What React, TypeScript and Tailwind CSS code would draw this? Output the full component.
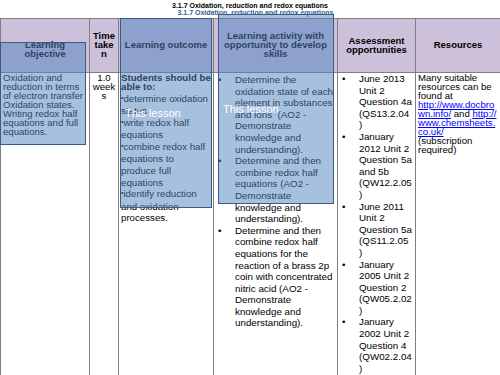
import React from "react";

const Lines = ({ lines }: { lines: string[] }) => (
  <>
    {lines.map((l, i) => (
      <div key={i} className="whitespace-pre">
        {l}
      </div>
    ))}
  </>
);

const BulletItem = ({ lines }: { lines: string[] }) => (
  <div className="flex">
    <div className="w-[18px] shrink-0 pl-[1px] leading-[9px] pt-[1px]">•</div>
    <div>
      <Lines lines={lines} />
    </div>
  </div>
);

const SmallBullet = ({ first, rest }: { first: string; rest: string[] }) => (
  <>
    <div className="whitespace-pre">
      <span className="relative -top-[2px] text-[7px]">•</span>
      {first}
    </div>
    <Lines lines={rest} />
  </>
);

export default function App() {
  const cell = "border-l border-[#808080]";
  const head =
    "border-l border-t border-b border-[#808080] bg-[#ccc0da] flex flex-col items-center justify-center text-center font-bold text-[9.5px] leading-[9px] text-black";
  const link = "text-[#0000ff] underline";
  return (
    <div className="relative w-[500px] h-[375px] overflow-hidden bg-white font-['Liberation_Sans',Arial,sans-serif] text-black">
      {/* Title */}
      <div className="h-[18px] pt-[2px] text-[7px] leading-[7px] font-bold text-center">
        <div className="whitespace-nowrap">3.1.7 Oxidation, reduction and redox equations</div>
        <div className="whitespace-nowrap pl-[11px] text-[#3b5b8f]">3.1.7 Oxidation, reduction and redox equations</div>
      </div>

      {/* Table */}
      <div className="grid grid-cols-[89px_29px_95px_124px_78px_85px] grid-rows-[55px_302px]">
        <div className={`${head} pt-[7px]`}>
          <div>Learning</div>
          <div>objective</div>
        </div>
        <div className={`${head} pb-[3px]`}>
          <div>Time</div>
          <div>take</div>
          <div>n</div>
        </div>
        <div className={`${head} pb-[2px]`}>
          <div className="whitespace-nowrap">Learning outcome</div>
        </div>
        <div className={`${head} pb-[2px]`}>
          <div className="whitespace-nowrap">Learning activity with</div>
          <div className="whitespace-nowrap">opportunity to develop</div>
          <div>skills</div>
        </div>
        <div className={`${head} pb-[2px]`}>
          <div>Assessment</div>
          <div>opportunities</div>
        </div>
        <div className={`${head} pb-[2px]`}>
          <div>Resources</div>
        </div>

        {/* Body */}
        <div className={`${cell} pl-[2px] text-[9.6px] leading-[9px]`}>
          <Lines
            lines={[
              "Oxidation and",
              "reduction in terms",
              "of electron transfer",
              "Oxidation states.",
              "Writing redox half",
              "equations and full",
              "equations.",
            ]}
          />
        </div>
        <div className={`${cell} text-center text-[9.6px] leading-[9px]`}>
          <div>1.0</div>
          <div>week</div>
          <div>s</div>
        </div>
        <div className={`${cell} pl-[2px] text-[9.7px]`}>
          <div className="font-bold leading-[9px]">
            <div className="whitespace-pre">Students should be</div>
            <div>able to:</div>
          </div>
          <div className="mt-[1.5px] leading-[11.6px]">
            <SmallBullet first="determine oxidation" rest={["states"]} />
            <SmallBullet first="write redox half" rest={["equations"]} />
            <SmallBullet first="combine redox half" rest={["equations to", "produce full", "equations"]} />
            <SmallBullet first="identify reduction" rest={["and oxidation", "processes."]} />
          </div>
        </div>
        <div className={`${cell} pl-[3px] pt-[1px] text-[9.8px] leading-[11.6px]`}>
          <BulletItem
            lines={[
              "Determine the",
              "oxidation state of each",
              "element in substances",
              "and ions  (AO2 -",
              "Demonstrate",
              "knowledge and",
              "understanding).",
            ]}
          />
          <BulletItem
            lines={[
              "Determine and then",
              "combine redox half",
              "equations (AO2 -",
              "Demonstrate",
              "knowledge and",
              "understanding).",
            ]}
          />
          <BulletItem
            lines={[
              "Determine and then",
              "combine redox half",
              "equations for the",
              "reaction of a brass 2p",
              "coin with concentrated",
              "nitric acid (AO2 -",
              "Demonstrate",
              "knowledge and",
              "understanding).",
            ]}
          />
        </div>
        <div className={`${cell} pl-[3px] pt-[0px] text-[9.8px] leading-[11.6px]`}>
          <BulletItem lines={["June 2013", "Unit 2", "Question 4a", "(QS13.2.04", ")"]} />
          <BulletItem lines={["January", "2012 Unit 2", "Question 5a", "and 5b", "(QW12.2.05", ")"]} />
          <BulletItem lines={["June 2011", "Unit 2", "Question 5a", "(QS11.2.05", ")"]} />
          <BulletItem lines={["January", "2005 Unit 2", "Question 2", "(QW05.2.02", ")"]} />
          <BulletItem lines={["January", "2002 Unit 2", "Question 4", "(QW02.2.04", ")"]} />
        </div>
        <div className={`${cell} pl-[2px] text-[9.6px] leading-[9px]`}>
          <div>Many suitable</div>
          <div className="whitespace-pre">resources can be</div>
          <div>found at</div>
          <div className={link}>http://www.docbro</div>
          <div className="whitespace-pre">
            <span className={link}>wn.info/</span> and <span className={link}>http://</span>
          </div>
          <div className={link}>www.chemsheets.</div>
          <div className={link}>co.uk/</div>
          <div>(subscription</div>
          <div>required)</div>
        </div>
      </div>

      {/* "This lesson" highlight overlays */}
      <div className="absolute left-0 top-[42px] w-[86px] h-[103px] bg-[rgba(79,129,189,0.5)] border border-[#385d8a]" />
      <div className="absolute left-[120px] top-[18px] w-[92px] h-[190px] bg-[rgba(79,129,189,0.5)] border border-[#385d8a] flex items-center pl-[4px]">
        <span className="text-white text-[11px] leading-[12px]">This lesson</span>
      </div>
      <div className="absolute left-[218px] top-[14px] w-[116px] h-[190px] bg-[rgba(79,129,189,0.5)] border border-[#385d8a] flex items-center pl-[4px]">
        <span className="text-white text-[11px] leading-[12px]">This lesson</span>
      </div>
    </div>
  );
}
